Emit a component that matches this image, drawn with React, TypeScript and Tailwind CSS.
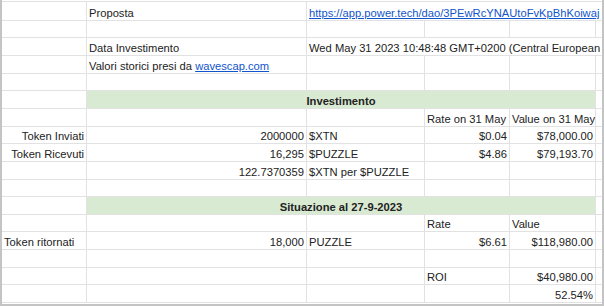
import React from "react";

const base =
  "flex items-end shrink-0 whitespace-nowrap overflow-hidden px-[2px] leading-[14px] border-r border-[#e2e2e2]";

type CellProps = {
  w: string;
  right?: boolean;
  children?: React.ReactNode;
};

function Cell({ w, right, children }: CellProps) {
  return (
    <div className={`${base} ${w} ${right ? "justify-end" : "justify-start"}`}>
      {children}
    </div>
  );
}

const A = "w-[85px]";
const B = "w-[220px]";
const C = "w-[118px]";
const D = "w-[85px]";
const E = "w-[86px]";

function Fill() {
  return <div className="flex-1" />;
}

function Row({ h, children }: { h: string; children?: React.ReactNode }) {
  return <div className={`flex border-b border-[#e2e2e2] ${h}`}>{children}</div>;
}

function Std({
  h,
  a,
  aRight,
  b,
  bRight,
  c,
  d,
  dRight,
  e,
  eRight,
}: {
  h: string;
  a?: React.ReactNode;
  aRight?: boolean;
  b?: React.ReactNode;
  bRight?: boolean;
  c?: React.ReactNode;
  d?: React.ReactNode;
  dRight?: boolean;
  e?: React.ReactNode;
  eRight?: boolean;
}) {
  return (
    <Row h={h}>
      <Cell w={A} right={aRight}>{a}</Cell>
      <Cell w={B} right={bRight}>{b}</Cell>
      <Cell w={C}>{c}</Cell>
      <Cell w={D} right={dRight}>{d}</Cell>
      <Cell w={E} right={eRight}>{e}</Cell>
      <Fill />
    </Row>
  );
}

function Overflow({ h, b, c }: { h: string; b: React.ReactNode; c: React.ReactNode }) {
  return (
    <Row h={h}>
      <Cell w={A} />
      <Cell w={B}>{b}</Cell>
      <div className="flex flex-1 items-end whitespace-nowrap overflow-hidden px-[2px] leading-[14px]">
        {c}
      </div>
    </Row>
  );
}

function Header({ h, title }: { h: string; title: string }) {
  return (
    <Row h={h}>
      <Cell w={A} />
      <div className="flex w-[509px] shrink-0 items-end justify-center whitespace-nowrap bg-[#d9ead3] px-[2px] font-bold leading-[14px] border-r border-[#e2e2e2]">
        {title}
      </div>
      <Fill />
    </Row>
  );
}

export default function App() {
  return (
    <div className="w-[604px] h-[306px] overflow-hidden bg-white border-l-[2px] border-r-[2px] border-b-[2px] border-[#c4c4c4] font-['Liberation_Sans',Arial,sans-serif] text-[11.2px] text-[#222]">
      <div className="h-[2px] border-b border-[#e2e2e2]" />
      <Overflow
        h="h-[19px]"
        b="Proposta"
        c={
          <span className="text-[#1155cc] underline">
            https://app.power.tech/dao/3PEwRcYNAUtoFvKpBhKoiwaj
          </span>
        }
      />
      <Std h="h-[17px]" />
      <Overflow
        h="h-[18px]"
        b="Data Investimento"
        c="Wed May 31 2023 10:48:48 GMT+0200 (Central European"
      />
      <Std
        h="h-[18px]"
        b={
          <span>
            Valori storici presi da{" "}
            <span className="text-[#1155cc] underline">wavescap.com</span>
          </span>
        }
      />
      <Std h="h-[17px]" />
      <Header h="h-[18px]" title="Investimento" />
      <Std h="h-[18px]" d="Rate on 31 May" e="Value on 31 May" />
      <Std
        h="h-[17px]"
        a="Token Inviati"
        aRight
        b="2000000"
        bRight
        c="$XTN"
        d="$0.04"
        dRight
        e="$78,000.00"
        eRight
      />
      <Std
        h="h-[18px]"
        a="Token Ricevuti"
        aRight
        b="16,295"
        bRight
        c="$PUZZLE"
        d="$4.86"
        dRight
        e="$79,193.70"
        eRight
      />
      <Std h="h-[18px]" b="122.7370359" bRight c="$XTN per $PUZZLE" />
      <Std h="h-[17px]" />
      <Header h="h-[18px]" title="Situazione al 27-9-2023" />
      <Std h="h-[17px]" d="Rate" e="Value" />
      <Std
        h="h-[18px]"
        a="Token ritornati"
        b="18,000"
        bRight
        c="PUZZLE"
        d="$6.61"
        dRight
        e="$118,980.00"
        eRight
      />
      <Std h="h-[18px]" />
      <Std h="h-[17px]" d="ROI" e="$40,980.00" eRight />
      <Std h="h-[18px]" e="52.54%" eRight />
    </div>
  );
}
